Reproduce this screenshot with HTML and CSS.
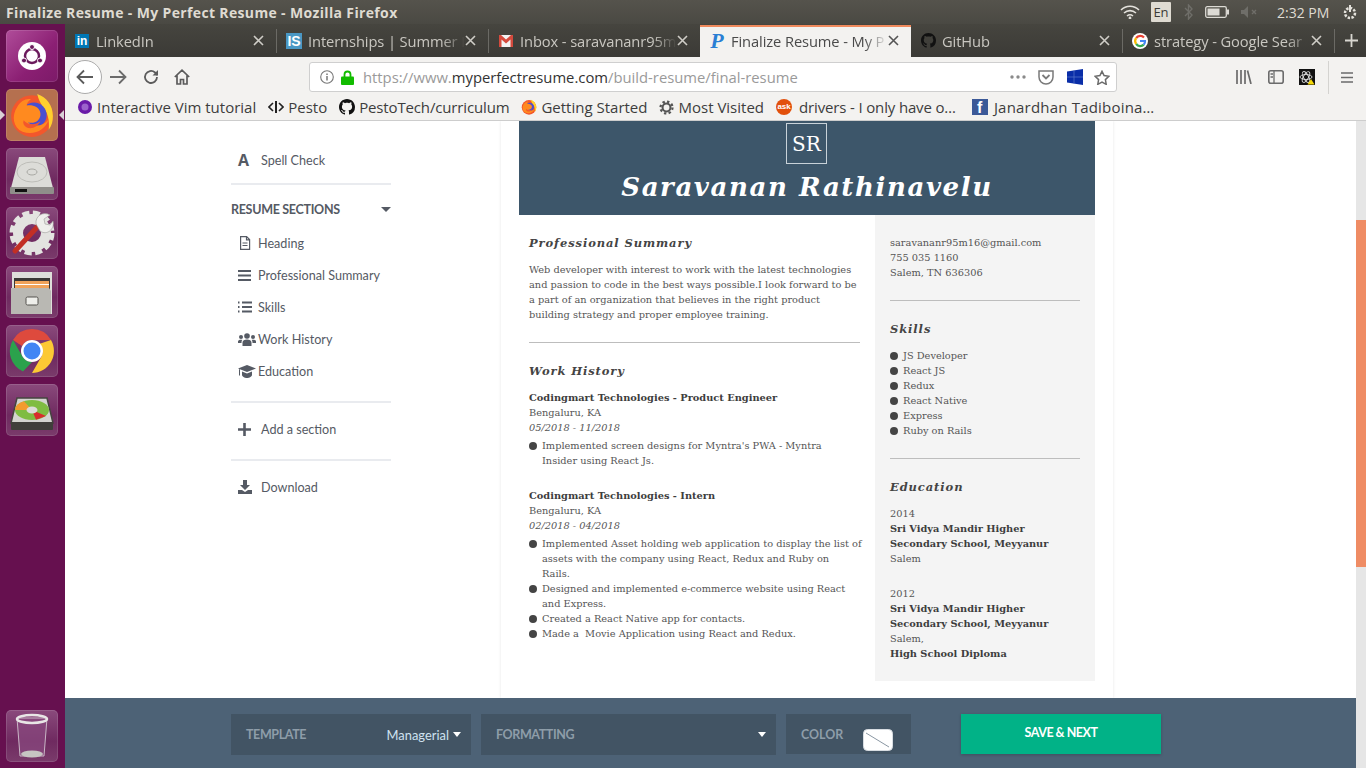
FILE: index.html
```html
<!DOCTYPE html>
<html lang="en">
<head>
<meta charset="utf-8">
<title>Finalize Resume - My Perfect Resume - Mozilla Firefox</title>
<link rel="stylesheet" href="styles.css">
</head>
<body>
<svg class="defs" width="0" height="0">
  <symbol id="i-close" viewBox="0 0 11 11"><path d="M1 1l9 9M10 1l-9 9" stroke="currentColor" stroke-width="1.6" fill="none"/></symbol>
  <symbol id="i-github" viewBox="0 0 16 16"><path fill="currentColor" d="M8 0C3.58 0 0 3.58 0 8c0 3.54 2.29 6.53 5.47 7.59.4.07.55-.17.55-.38 0-.19-.01-.82-.01-1.49-2.01.37-2.53-.49-2.69-.94-.09-.23-.48-.94-.82-1.13-.28-.15-.68-.52-.01-.53.63-.01 1.08.58 1.23.82.72 1.21 1.87.87 2.33.66.07-.52.28-.87.51-1.07-1.78-.2-3.64-.89-3.64-3.95 0-.87.31-1.59.82-2.15-.08-.2-.36-1.02.08-2.12 0 0 .67-.21 2.2.82.64-.18 1.32-.27 2-.27.68 0 1.36.09 2 .27 1.53-1.04 2.2-.82 2.2-.82.44 1.1.16 1.92.08 2.12.51.56.82 1.27.82 2.15 0 3.07-1.87 3.75-3.65 3.95.29.25.54.73.54 1.48 0 1.07-.01 1.93-.01 2.2 0 .21.15.46.55.38A8.013 8.013 0 0016 8c0-4.42-3.58-8-8-8z"/></symbol>
  <symbol id="i-firefox" viewBox="0 0 44 44">
    <circle cx="22" cy="23" r="20" fill="#f3572c"/>
    <path d="M27 2c9 3 15 11 15 21 0 5-1 9-4 13 1-9-1-17-6-22-2-4-4-7-5-12z" fill="#ffd02e"/>
    <circle cx="24" cy="22" r="12" fill="#4a4fd0"/>
    <path d="M8 14c3-5 8-8 13-7-3 2-4 4-4 6 5-1 12 1 13 7 1 7-6 11-12 9 6 5 15 4 20-3-3 10-14 16-25 12C4 34 2 23 8 14z" fill="#ff8a1f"/>
    <path d="M14 27c4 5 11 5 16 1-2 5-8 8-13 6-3-2-4-4-3-7z" fill="#f3572c"/>
  </symbol>
</svg>

<header class="topbar">
  <div class="wintitle">Finalize Resume - My Perfect Resume - Mozilla Firefox</div>
  <div class="tray">
    <svg class="tray-wifi" width="20" height="14" viewBox="0 0 20 14" fill="none" stroke="#e4e2dc" stroke-width="1.6"><path d="M1 5c5-5 13-5 18 0M4 8c3.500-3.200 8.500-3.200 12 0M7 11c1.800-1.500 4.200-1.500 6 0"/><circle cx="10" cy="13" r=".6" fill="#e4e2dc"/></svg>
    <span class="tray-lang">En</span>
    <svg class="tray-bt" width="9" height="16" viewBox="0 0 9 16" fill="none" stroke="#6f6e69" stroke-width="1.4"><path d="M1 4l7 7-3.500 4V1L8 5l-7 7"/></svg>
    <svg class="tray-bat" width="24" height="12" viewBox="0 0 24 12"><rect x=".7" y=".7" width="20.600" height="10.600" rx="1.500" fill="none" stroke="#dcdad4" stroke-width="1.300"/><rect x="2.500" y="2.500" width="12" height="7" fill="#dcdad4"/><rect x="22" y="3.500" width="2" height="5" fill="#dcdad4"/></svg>
    <svg class="tray-vol" width="18" height="12" viewBox="0 0 18 12"><path d="M0 4h3l4-4v12l-4-4H0z" fill="#6f6e69"/><path d="M11 4l4 4M15 4l-4 4" stroke="#6f6e69" stroke-width="1.400"/></svg>
    <span class="tray-time">2:32 PM</span>
    <svg class="tray-power" width="16" height="16" viewBox="0 0 16 16" fill="none" stroke="#e4e2dc"><path d="M8 1v7" stroke-width="2"/><circle cx="8" cy="9" r="5" stroke-width="2.500" stroke-dasharray="2.400 1.400"/></svg>
  </div>
</header>

<div class="desktop">
  <nav class="dock">
    <div class="tile tile-ubuntu">
      <svg width="52" height="52" viewBox="0 0 52 52"><circle cx="26" cy="26" r="14" fill="#fff"/><circle cx="26" cy="26" r="7" fill="none" stroke="#6b1a5c" stroke-width="2.500"/><g fill="#6b1a5c" stroke="#fff"><circle cx="26" cy="17" r="2.500"/><circle cx="18" cy="30.500" r="2.500"/><circle cx="34" cy="30.500" r="2.500"/></g></svg>
    </div>
    <div class="tile tile-firefox"><svg width="46" height="46"><use href="#i-firefox"/></svg></div>
    <div class="tile">
      <svg width="52" height="52" viewBox="0 0 52 52"><path d="M13 9h26l8 31H5z" fill="#dcdcd8"/><rect x="4" y="39" width="44" height="7" rx="1" fill="#8f8e8a"/><rect x="9" y="41" width="12" height="3" fill="#111"/><ellipse cx="26" cy="24" rx="15" ry="10" fill="none" stroke="#bdbdb8"/><ellipse cx="26" cy="24" rx="5" ry="3" fill="none" stroke="#a9a9a4"/></svg>
    </div>
    <div class="tile">
      <svg width="52" height="52" viewBox="0 0 52 52"><circle cx="26" cy="26" r="14" fill="none" stroke="#e3e3e0" stroke-width="10"/><circle cx="26" cy="26" r="20" fill="none" stroke="#e3e3e0" stroke-width="5" stroke-dasharray="7 3.500"/><path d="M9 44l25-27" stroke="#c22f25" stroke-width="5" stroke-linecap="round"/><path d="M30 17c-1-8 7-13 14-9l-6 4 1 5 5 1 3-4c2 8-6 15-13 10z" fill="#efefec" stroke="#9c9c98" stroke-width=".6"/></svg>
    </div>
    <div class="tile">
      <svg width="52" height="52" viewBox="0 0 52 52"><path d="M6 6h40v42H6z" fill="#dededa"/><rect x="8" y="12" width="36" height="14" fill="#3a3735"/><rect x="9" y="15" width="34" height="7" fill="#efa25a"/><rect x="9" y="18" width="34" height="1" fill="#fff"/><path d="M5 22h38l2 3v23H5z" fill="#b9b8b3"/><rect x="20" y="31" width="12" height="8" rx="1.500" fill="#eeeeea" stroke="#55534f"/></svg>
    </div>
    <div class="tile">
      <svg width="52" height="52" viewBox="0 0 52 52">
        <path d="M26 4a22 22 0 0 1 19 11H26a11 11 0 0 0-10 6L7 15A22 22 0 0 1 26 4z" fill="#de4a3d"/>
        <path d="M7 15l9.500 16.500a11 11 0 0 0 9.500 5.500L17 46.500A22 22 0 0 1 7 15z" fill="#2ba24c"/>
        <path d="M45 15a22 22 0 0 1-19 33l9.500-16.500A11 11 0 0 0 33 19z" fill="#fcc934"/>
        <circle cx="26" cy="26" r="11" fill="#fff"/><circle cx="26" cy="26" r="8.500" fill="#4285f4"/>
      </svg>
    </div>
    <div class="tile">
      <svg width="52" height="52" viewBox="0 0 52 52"><path d="M11 14h30l6 25H5z" fill="#d4d4d0" stroke="#45443f" stroke-width="1.500"/><rect x="5" y="38" width="42" height="8" rx="1" fill="#403f3b"/><ellipse cx="26" cy="26" rx="17" ry="10" fill="#7fbc41"/><path d="M26 26L9 26a17 10 0 0 1 9-8.800z" fill="#f39b2e"/><path d="M26 26l14 6-10 3.800z" fill="#d92c2c"/><ellipse cx="26" cy="26" rx="5.500" ry="3.500" fill="#dcdcd8"/></svg>
    </div>
    <div class="tile tile-trash">
      <svg width="52" height="52" viewBox="0 0 52 52"><path d="M11 8h30l-3 38H14z" fill="#8a4a80" fill-opacity=".7" stroke="#c9b7c6"/><ellipse cx="26" cy="9" rx="15" ry="4" fill="none" stroke="#e8e6e6" stroke-width="2.500"/><ellipse cx="26" cy="44" rx="11" ry="3.500" fill="#c6c4c2"/></svg>
    </div>
  </nav>

  <div class="browser">
    <div class="tabs">
      <div class="tab">
        <span class="fav"><span class="fav-in">in</span></span><span class="tab-title">LinkedIn</span>
        <svg class="tab-close" width="11" height="11"><use href="#i-close"/></svg>
      </div>
      <i class="tab-sep"></i>
      <div class="tab">
        <span class="fav"><span class="fav-is">IS</span></span><span class="tab-title">Internships | Summer I</span>
        <svg class="tab-close" width="11" height="11"><use href="#i-close"/></svg>
      </div>
      <i class="tab-sep"></i>
      <div class="tab">
        <span class="fav"><svg width="14" height="12" viewBox="0 0 14 12"><rect width="14" height="12" fill="#f2f2f2"/><path d="M0 0h2l5 4.500L12 0h2v12h-2.500V4.500L7 8.500 2.500 4.500V12H0z" fill="#d44a3d"/></svg></span><span class="tab-title">Inbox - saravananr95m</span>
        <svg class="tab-close" width="11" height="11"><use href="#i-close"/></svg>
      </div>
      <div class="tab tab-active">
        <span class="fav"><span class="fav-p">P</span></span><span class="tab-title">Finalize Resume - My P</span>
        <svg class="tab-close" width="11" height="11"><use href="#i-close"/></svg>
      </div>
      <div class="tab">
        <span class="fav fav-git"><svg width="15" height="15"><use href="#i-github"/></svg></span><span class="tab-title">GitHub</span>
        <svg class="tab-close" width="11" height="11"><use href="#i-close"/></svg>
      </div>
      <i class="tab-sep"></i>
      <div class="tab">
        <span class="fav"><svg width="16" height="16" viewBox="0 0 16 16"><circle cx="8" cy="8" r="8" fill="#fff"/><g fill="none" stroke-width="2.200"><path d="M12 4.500A5 5 0 0 0 4.200 5" stroke="#ea4335"/><path d="M4.200 5a5 5 0 0 0 0 6" stroke="#fbbc05"/><path d="M4.200 11a5 5 0 0 0 7.600.6" stroke="#34a853"/><path d="M11.800 11.600A5 5 0 0 0 13 8H8" stroke="#4285f4"/></g></svg></span><span class="tab-title">strategy - Google Sear</span>
        <svg class="tab-close" width="11" height="11"><use href="#i-close"/></svg>
      </div>
      <i class="tab-sep"></i>
      <svg class="tab-new" width="13" height="13" viewBox="0 0 13 13"><path d="M6.500 0v13M0 6.500h13" stroke="#d8d6d0" stroke-width="1.800"/></svg>
    </div>

    <div class="navbar">
      <div class="nav-back">
        <svg width="18" height="16" viewBox="0 0 18 16" fill="none" stroke="#5b5b5b" stroke-width="1.800"><path d="M17 8H2M8 1.500L1.500 8 8 14.500"/></svg>
      </div>
      <svg class="nav-forward" width="18" height="16" viewBox="0 0 18 16" fill="none" stroke="#6b6b6b" stroke-width="1.800"><path d="M1 8h15M10 1.500L16.500 8 10 14.500"/></svg>
      <svg class="nav-reload" width="16" height="16" viewBox="0 0 16 16" fill="none" stroke="#5b5b5b" stroke-width="1.800"><path d="M14 8a6 6 0 1 1-2-4.500L14.500 6"/><path d="M15 1v5.500H9.500" fill="#5b5b5b" stroke="none"/></svg>
      <svg class="nav-home" width="16" height="16" viewBox="0 0 16 16" fill="none" stroke="#5b5b5b" stroke-width="1.700"><path d="M.8 8L8 1.200 15.200 8M3 6.500V15h3.500v-4.500h3V15H13V6.500"/></svg>

      <div class="urlbar">
        <svg class="url-info" width="14" height="14" viewBox="0 0 14 14" fill="none" stroke="#777" stroke-width="1.100"><circle cx="7" cy="7" r="6.300"/><path d="M7 6v4.500" stroke-width="1.500"/><path d="M7 3.400v1.500" stroke-width="1.500"/></svg>
        <svg class="url-lock" width="13" height="15" viewBox="0 0 13 15"><path d="M3.500 7V4.500a3 3 0 0 1 6 0V7" fill="none" stroke="#12bc00" stroke-width="1.800"/><rect y="6.500" width="13" height="8.500" rx="1" fill="#12bc00"/></svg>
        <span class="url-text">https://www.<b>myperfectresume.com</b>/build-resume/final-resume</span>
        <svg class="url-dots" width="16" height="4" viewBox="0 0 16 4" fill="#8a8a8a"><circle cx="2" cy="2" r="1.700"/><circle cx="8" cy="2" r="1.700"/><circle cx="14" cy="2" r="1.700"/></svg>
        <svg class="url-pocket" width="16" height="15" viewBox="0 0 16 15" fill="none" stroke="#7a7a7a" stroke-width="1.500"><path d="M1 1h14v6a7 7 0 0 1-14 0z"/><path d="M4.500 5L8 8.500 11.500 5" stroke-width="1.800"/></svg>
        <svg class="url-win" width="16" height="16" viewBox="0 0 16 16"><path d="M0 2.500L16 0v16L0 13.500z" fill="#0a2ea8"/><path d="M7 1.500v13M0 8h16" stroke="#5a76cc" stroke-width=".7"/></svg>
        <svg class="url-star" width="16" height="15" viewBox="0 0 16 15" fill="none" stroke="#6b6b6b" stroke-width="1.500"><path d="M8 1.300l2.100 4.300 4.700.7-3.400 3.300.8 4.700L8 12.100l-4.200 2.200.8-4.700L1.200 6.300l4.700-.7z"/></svg>
      </div>

      <svg class="tool-lib" width="16" height="14" viewBox="0 0 16 14" stroke="#6b6b6b" stroke-width="1.700" fill="none"><path d="M1 0v14M5 0v14M9 0v14M11.500 .5l3.500 13.500"/></svg>
      <svg class="tool-side" width="16" height="14" viewBox="0 0 16 14" fill="none" stroke="#6b6b6b" stroke-width="1.600"><rect x=".8" y=".8" width="14.400" height="12.400" rx="2"/><path d="M6 1v12M2.500 4H5M2.500 7H5" stroke-width="1.300"/></svg>
      <svg class="tool-atom" width="16" height="16" viewBox="0 0 16 16"><rect width="16" height="16" fill="#111"/><g fill="none" stroke="#ddd" stroke-width=".9"><ellipse cx="7" cy="8" rx="6" ry="2.500"/><ellipse cx="7" cy="8" rx="6" ry="2.500" transform="rotate(60 7 8)"/><ellipse cx="7" cy="8" rx="6" ry="2.500" transform="rotate(120 7 8)"/></g><path d="M12 10l3.500 5.500h-7z" fill="#f5d90a"/></svg>
      <i class="tool-sep"></i>
      <svg class="tool-menu" width="12" height="11" viewBox="0 0 12 11" stroke="#6b6b6b" stroke-width="1.700"><path d="M0 1h12M0 5.500h12M0 10h12"/></svg>
    </div>

    <div class="bookmarks">
      <span class="bm bm-first"><svg width="14" height="14" viewBox="0 0 14 14"><circle cx="7" cy="7" r="7" fill="#6a1ba8"/><circle cx="7" cy="7" r="3.500" fill="#9c63cc"/></svg>Interactive Vim tutorial</span>
      <span class="bm"><svg width="16" height="12" viewBox="0 0 16 12" fill="none" stroke="#222" stroke-width="1.600"><path d="M5 2L1 6l4 4M11 2l4 4-4 4"/><path d="M8 0v12" stroke-width="2"/></svg>Pesto</span>
      <span class="bm bm-git bm-tight"><svg width="16" height="16"><use href="#i-github"/></svg>PestoTech/curriculum</span>
      <span class="bm"><svg width="16" height="16"><use href="#i-firefox"/></svg>Getting Started</span>
      <span class="bm"><svg width="15" height="15" viewBox="0 0 16 16" fill="none" stroke="#555"><circle cx="8" cy="8" r="4.200" stroke-width="2.200"/><circle cx="8" cy="8" r="6.400" stroke-width="2.400" stroke-dasharray="2.500 2.500"/></svg>Most Visited</span>
      <span class="bm bm-tight"><span class="fav-ask">ask</span>drivers - I only have o…</span>
      <span class="bm bm-last"><span class="fav-fb">f</span>Janardhan Tadiboina…</span>
    </div>

    <div class="viewport">
      <div class="main">
        <div class="scroller">
          <aside class="side">
            <div class="side-item"><span class="side-a">A</span>Spell Check</div>
            <div class="side-rule side-rule-top"></div>
            <div class="side-head">RESUME SECTIONS<i class="caret caret-dark"></i></div>
            <div class="side-list">
              <div class="side-item">
                <svg class="side-ico" width="18" height="14" viewBox="0 0 18 14" fill="none" stroke="#555a64" stroke-width="1.200"><path d="M2.600 .6h6l3 3v9.800h-9zM8.500 .6v3.200h3M4.500 7h5M4.500 9.500h5"/></svg>Heading
              </div>
              <div class="side-item">
                <svg class="side-ico" width="18" height="11" viewBox="0 0 18 11" stroke="#555a64" stroke-width="2"><path d="M0 1h13M0 5.500h13M0 10h13"/></svg>Professional Summary
              </div>
              <div class="side-item">
                <svg class="side-ico" width="18" height="12" viewBox="0 0 18 12" stroke="#555a64"><path d="M4 1.500h10M4 6h10M4 10.500h10" stroke-width="2"/><path d="M0 1.500h2M0 6h2M0 10.500h2" stroke-width="2" stroke-dasharray="1 .5"/></svg>Skills
              </div>
              <div class="side-item">
                <svg class="side-ico" width="18" height="13" viewBox="0 0 18 13" fill="#555a64"><circle cx="9" cy="3" r="2.800"/><circle cx="3" cy="4" r="2"/><circle cx="15" cy="4" r="2"/><path d="M4.500 13V9.500C4.500 7.500 6.500 6.500 9 6.500s4.500 1 4.500 3V13zM0 10V8.500C0 7.300 1.300 6.800 3 6.800c.5 0 .9 0 1.300.2-.6.600-.8 1.500-.8 3zM18 10V8.500c0-1.200-1.300-1.700-3-1.700-.5 0-.9 0-1.300.2.600.6.800 1.500.8 3z"/></svg>Work History
              </div>
              <div class="side-item">
                <svg class="side-ico" width="18" height="13" viewBox="0 0 18 13" fill="#555a64"><path d="M9 0l9 3.500L9 7 0 3.500z"/><path d="M4 6.500L9 8.500l5-2V10c0 1.500-2.500 3-5 3S4 11.500 4 10z"/><path d="M1 4v6.500h1V4.500z"/></svg>Education
              </div>
            </div>
            <div class="side-rule"></div>
            <div class="side-item">
              <svg class="side-ico side-ico-wide" width="14" height="13" viewBox="0 0 14 13" stroke="#555a64" stroke-width="2.600"><path d="M6.500 0v13M0 6.500h13"/></svg>Add a section
            </div>
            <div class="side-rule"></div>
            <div class="side-item">
              <svg class="side-ico side-ico-wide" width="14" height="14" viewBox="0 0 14 14" fill="#555a64"><path d="M5 0h4v5h3L7 10 2 5h3z"/><path d="M0 10h4l3 2 3-2h4v4H0z"/></svg>Download
            </div>
          </aside>

          <section class="paper">
            <div class="resume">
              <header class="res-head">
                <div class="res-init">SR</div>
                <h1 class="res-name">Saravanan Rathinavelu</h1>
              </header>
              <div class="res-body">
                <div class="res-left">
                  <h2>Professional Summary</h2>
                  <p class="res-gap">Web developer with interest to work with the latest technologies and passion to code in the best ways possible.I look forward to be a part of an organization that believes in the right product building strategy and proper employee training.</p>
                  <hr>
                  <h2>Work History</h2>
                  <div class="job res-gap">
                    <p><b>Codingmart Technologies - Product Engineer</b></p>
                    <p>Bengaluru, KA</p>
                    <p><em>05/2018 - 11/2018</em></p>
                    <ul>
                      <li><span>Implemented screen designs for Myntra's PWA - Myntra<br>Insider using React Js.</span></li>
                    </ul>
                  </div>
                  <div class="job">
                    <p><b>Codingmart Technologies - Intern</b></p>
                    <p>Bengaluru, KA</p>
                    <p><em>02/2018 - 04/2018</em></p>
                    <ul>
                      <li><span>Implemented Asset holding web application to display the list of<br>assets with the company using React, Redux and Ruby on<br>Rails.</span></li>
                      <li><span>Designed and implemented e-commerce website using React<br>and Express.</span></li>
                      <li><span>Created a React Native app for contacts.</span></li>
                      <li><span>Made a &nbsp;Movie Application using React and Redux.</span></li>
                    </ul>
                  </div>
                </div>
                <div class="res-right">
                  <p>saravananr95m16@gmail.com</p>
                  <p>755 035 1160</p>
                  <p>Salem, TN 636306</p>
                  <hr>
                  <h2>Skills</h2>
                  <ul class="res-gap">
                    <li><span>JS Developer</span></li>
                    <li><span>React JS</span></li>
                    <li><span>Redux</span></li>
                    <li><span>React Native</span></li>
                    <li><span>Express</span></li>
                    <li><span>Ruby on Rails</span></li>
                  </ul>
                  <hr>
                  <h2>Education</h2>
                  <div class="edu res-gap">
                    <p>2014</p>
                    <p><b>Sri Vidya Mandir Higher Secondary School, Meyyanur</b></p>
                    <p>Salem</p>
                  </div>
                  <div class="edu">
                    <p>2012</p>
                    <p><b>Sri Vidya Mandir Higher Secondary School, Meyyanur</b></p>
                    <p>Salem,</p>
                    <p><b>High School Diploma</b></p>
                  </div>
                </div>
              </div>
            </div>
          </section>
        </div>

        <footer class="actions">
          <div class="action action-template"><span class="action-label">TEMPLATE</span><span class="action-value">Managerial</span><i class="caret"></i></div>
          <div class="action action-format"><span class="action-label">FORMATTING</span><i class="caret"></i></div>
          <div class="action action-color"><span class="action-label">COLOR</span>
            <svg class="swatch" width="30" height="22" viewBox="0 0 30 22"><rect x=".5" y=".5" width="29" height="21" rx="4" fill="#fff" stroke="#d8dde2"/><path d="M3 4l23 14" stroke="#8a97a3"/></svg>
          </div>
          <div class="save">SAVE &amp; NEXT</div>
        </footer>
      </div>
      <div class="scrollbar"><div class="scroll-thumb"></div></div>
    </div>
  </div>
</div>
</body>
</html>
```

FILE: styles.css
```css
* {
  box-sizing: border-box;
}

html, body {
  margin: 0;
  height: 768px;
  overflow: hidden;
}

body {
  display: flex;
  flex-direction: column;
  font-family: "Open Sans", sans-serif;
  background: #fff;
}

.defs {
  position: absolute;
}

svg {
  flex: none;
  display: block;
}

/* ubuntu panel */
.topbar {
  height: 24px;
  flex: none;
  display: flex;
  align-items: center;
  justify-content: space-between;
  padding-left: 6px;
  background: linear-gradient(#55534c, #4a4943);
}

.wintitle {
  font-size: 14px;
  font-weight: 700;
  color: #dfdbd2;
  letter-spacing: .35px;
}

.tray {
  display: flex;
  align-items: center;
  height: 24px;
}

.tray-lang {
  width: 20px;
  height: 20px;
  margin-left: 11px;
  background: #dfdbd2;
  border-radius: 1px;
  color: #3c3b37;
  font-size: 13px;
  line-height: 20px;
  text-align: center;
}

.tray-bt {
  margin-left: 13px;
}

.tray-bat {
  margin-left: 12px;
}

.tray-vol {
  margin-left: 12px;
}

.tray-time {
  margin-left: 18px;
  width: 53px;
  font-size: 14px;
  color: #dfdbd2;
  white-space: nowrap;
}

.tray-power {
  margin: 0 8px 0 12px;
}

.desktop {
  flex: 1;
  display: flex;
  min-height: 0;
}

/* launcher */
.dock {
  width: 65px;
  flex: none;
  display: flex;
  flex-direction: column;
  gap: 7px;
  padding: 6px 0;
  background: #66104f;
}

.tile {
  position: relative;
  width: 52px;
  height: 52px;
  margin-left: 6px;
  display: flex;
  align-items: center;
  justify-content: center;
  border-radius: 5px;
  background: linear-gradient(#8a4a7c, #6f2a60 60%, #7a3b6b);
  box-shadow: inset 0 0 0 1px rgba(255, 255, 255, .12);
}

.tile-ubuntu {
  background: linear-gradient(135deg, #b04d9a, #8b1f73 60%, #7c1a68);
}

.tile-firefox {
  background: #b5704f;
}

.tile-firefox::before,
.tile-firefox::after {
  content: "";
  position: absolute;
  top: 21px;
  border: 5px solid transparent;
}

.tile-firefox::before {
  left: -6px;
  border-left-color: #d9d0d6;
}

.tile-firefox::after {
  right: -6px;
  border-right-color: #d9d0d6;
}

.tile-trash {
  margin-top: auto;
}

/* browser chrome */
.browser {
  flex: 1;
  min-width: 0;
  display: flex;
  flex-direction: column;
}

.tabs {
  height: 33px;
  flex: none;
  display: flex;
  align-items: stretch;
  background: linear-gradient(#46453f, #3b3a36);
}

.tab {
  width: 211px;
  flex: none;
  display: flex;
  align-items: center;
  gap: 6px;
  padding: 0 12px 0 9px;
  color: #c9c7c1;
  font-size: 14.7px;
}

.tab-active {
  margin-top: 1px;
  padding-bottom: 3px;
  border-top: 2px solid #f08a5d;
  background: #f3f2f0;
  color: #4a4a4a;
}

.tab-title {
  flex: 1;
  min-width: 0;
  margin-right: -6px;
  letter-spacing: -.1px;
  overflow: hidden;
  white-space: nowrap;
  -webkit-mask-image: linear-gradient(to right, #000 calc(100% - 24px), transparent);
  mask-image: linear-gradient(to right, #000 calc(100% - 24px), transparent);
}

.tab-close {
  color: #cfcdc7;
}

.tab-active .tab-close {
  color: #555;
}

.tab-sep {
  width: 1px;
  height: 24px;
  flex: none;
  align-self: center;
  background: #6b6a65;
}

.tab-new {
  align-self: center;
  margin-left: 10px;
}

.fav {
  width: 16px;
  height: 16px;
  flex: none;
  display: flex;
  align-items: center;
  justify-content: center;
}

.fav-git {
  color: #111;
}

.fav-in,
.fav-is {
  display: block;
  text-align: center;
  color: #fff;
  font-weight: 700;
  font-family: "Liberation Sans", sans-serif;
}

.fav-in {
  width: 14px;
  height: 14px;
  background: #0077b5;
  font-size: 12px;
  line-height: 14px;
}

.fav-is {
  width: 16px;
  height: 16px;
  background: #4a97c4;
  font-size: 14px;
  line-height: 16px;
}

.fav-p {
  font: italic 700 22px/16px "Liberation Serif", serif;
  color: #2a7fd4;
}

.navbar {
  height: 37px;
  flex: none;
  display: flex;
  align-items: center;
  padding-top: 3px;
  background: #f3f2f0;
}

.nav-back {
  width: 34px;
  height: 34px;
  margin-left: 3px;
  display: flex;
  align-items: center;
  justify-content: center;
  background: #fff;
  border: 1px solid #ababab;
  border-radius: 50%;
}

.nav-forward {
  margin-left: 7px;
}

.nav-reload {
  margin-left: 16px;
}

.nav-home {
  margin-left: 15px;
}

.urlbar {
  width: 808px;
  height: 30px;
  margin-left: 119px;
  display: flex;
  align-items: center;
  padding-left: 10px;
  background: #fff;
  border: 1px solid #cfcfcf;
  border-radius: 3px;
}

.url-lock {
  margin-left: 7px;
}

.url-text {
  margin-left: 9px;
  font-size: 14.8px;
  color: #9a9a9a;
  white-space: nowrap;
}

.url-text b {
  font-weight: 400;
  color: #333;
}

.url-dots {
  margin-left: auto;
}

.url-pocket {
  margin-left: 12px;
}

.url-win {
  margin-left: 13px;
}

.url-star {
  margin: 0 6px 0 11px;
}

.tool-lib {
  margin-left: 119px;
}

.tool-side {
  margin-left: 16px;
}

.tool-atom {
  margin-left: 15px;
}

.tool-sep {
  width: 1px;
  height: 33px;
  margin-left: 13px;
  background: #d4d3d0;
}

.tool-menu {
  margin-left: 12px;
}

.bookmarks {
  height: 27px;
  flex: none;
  display: flex;
  align-items: center;
  gap: 12px;
  padding-left: 13px;
  background: #f3f2f0;
  border-bottom: 1px solid #cdcdcd;
  font-size: 15px;
  color: #3d3d3d;
  white-space: nowrap;
}

.bm {
  display: flex;
  align-items: center;
  gap: 4px;
}

.bm-first {
  gap: 5px;
}

.bm-tight {
  letter-spacing: -.15px;
}

.bm-last {
  margin-left: 4px;
  letter-spacing: .2px;
}

.bm-git svg {
  color: #111;
}

.fav-ask {
  width: 16px;
  height: 16px;
  margin-right: 3px;
  background: #e2500c;
  border-radius: 50%;
  color: #fff;
  font: 700 8px/16px "Liberation Sans", sans-serif;
  text-align: center;
}

.fav-fb {
  width: 16px;
  height: 16px;
  margin-right: 2px;
  padding-left: 5px;
  background: #3b5998;
  color: #fff;
  font: 700 16px/18px "Liberation Sans", sans-serif;
}

/* page */
.viewport {
  flex: 1;
  min-height: 0;
  display: flex;
}

.main {
  flex: 1;
  min-width: 0;
  display: flex;
  flex-direction: column;
}

.scroller {
  flex: 1;
  min-height: 0;
  overflow: hidden;
  display: flex;
  padding-left: 166px;
}

.scrollbar {
  width: 10px;
  flex: none;
  padding-top: 99px;
  background: #e6e6e6;
}

.scroll-thumb {
  height: 347px;
  background: #ef8c64;
}

.side {
  width: 160px;
  flex: none;
  padding-top: 23px;
  font-family: Lato, sans-serif;
  font-size: 12.6px;
  color: #555a64;
}

.side-item {
  display: flex;
  align-items: center;
  height: 32px;
  padding-left: 7px;
}

.side-a {
  width: 23px;
  font: 700 16px/32px "Open Sans", sans-serif;
}

.side-ico {
  margin-right: 2px;
}

.side-ico-wide {
  margin-right: 9px;
}

.side-rule {
  height: 2px;
  margin: 14px 0 10px;
  background: #e9ebef;
}

.side-rule-top {
  margin: 7px 0 9px;
}

.side-head {
  display: flex;
  align-items: center;
  justify-content: space-between;
  height: 32px;
  padding-bottom: 1px;
  font-weight: 700;
  font-size: 12.5px;
  letter-spacing: -.3px;
}

.side-list {
  margin-top: 1px;
}

.caret {
  width: 0;
  height: 0;
  flex: none;
  border: 4px solid transparent;
  border-bottom: 0;
  border-top: 5px solid #fff;
}

.caret-dark {
  border-width: 5px 5px 0;
  border-top-color: #555a64;
}

.paper {
  width: 612px;
  flex: none;
  margin-left: 110px;
  padding: 0 18px;
  background: #fff;
  box-shadow: 0 0 3px rgba(0, 0, 0, .1);
  font: 9.8px/15px "DejaVu Serif", serif;
  color: #555;
}

.res-head {
  height: 94px;
  padding-top: 2px;
  background: #3d566a;
  color: #fff;
  text-align: center;
}

.res-init {
  width: 41px;
  height: 41px;
  margin-left: 267px;
  border: 1px solid #c9d2d9;
  font-size: 20px;
  line-height: 41px;
}

.res-name {
  margin: 6px 0 0;
  font-size: 26px;
  font-weight: 700;
  font-style: italic;
  line-height: 34px;
  letter-spacing: 1.6px;
}

.res-body {
  display: flex;
}

.res-left {
  width: 356px;
  padding: 20px 15px 20px 10px;
}

.res-right {
  width: 220px;
  padding: 20px 15px;
  background: #f4f4f4;
}

.resume h2 {
  margin: 0 0 -1px;
  padding-top: 1px;
  font-size: 11.5px;
  line-height: 15px;
  font-style: italic;
  font-weight: 700;
  letter-spacing: .9px;
  color: #444;
}

.resume p {
  margin: 0;
}

.resume b {
  color: #3d3d3d;
}

.resume hr {
  height: 1px;
  margin: 20px 0;
  border: 0;
  background: #bdbdbd;
}

.res-gap {
  margin-top: 12px !important;
}

.job + .job,
.edu + .edu {
  margin-top: 20px;
}

.resume ul {
  margin: 3px 0 0;
  padding: 0;
  list-style: none;
}

.resume li {
  display: flex;
  gap: 5px;
}

.resume li::before {
  content: "";
  width: 8px;
  height: 8px;
  flex: none;
  margin-top: 4px;
  border-radius: 50%;
  background: #444;
}

.job li span {
  white-space: nowrap;
}

/* bottom bar */
.actions {
  height: 70px;
  flex: none;
  display: flex;
  align-items: flex-start;
  gap: 10px;
  padding: 16px 0 0 166px;
  background: #4d6276;
  font-family: Lato, sans-serif;
}

.action {
  height: 41px;
  display: flex;
  align-items: center;
  padding: 0 10px 0 15px;
  background: #425464;
}

.action-label {
  padding-bottom: 1px;
  font-size: 12.5px;
  font-weight: 700;
  letter-spacing: -.4px;
  color: #8e9da9;
}

.action-template {
  width: 240px;
}

.action-value {
  margin: 0 4px 0 auto;
  font-size: 12.9px;
  color: #cfe2f0;
}

.action-format {
  width: 295px;
  justify-content: space-between;
}

.action-color {
  width: 125px;
  height: 40px;
}

.action-color .action-label {
  margin-top: 2px;
  font-size: 12.4px;
  letter-spacing: 0;
}

.swatch {
  margin: 12px 8px 0 auto;
}

.save {
  width: 200px;
  height: 40px;
  margin-left: 40px;
  background: #01b287;
  box-shadow: 0 1px 3px rgba(0, 0, 0, .2);
  color: #fff;
  font-size: 12.5px;
  font-weight: 700;
  letter-spacing: -.5px;
  line-height: 38px;
  text-align: center;
}
```
